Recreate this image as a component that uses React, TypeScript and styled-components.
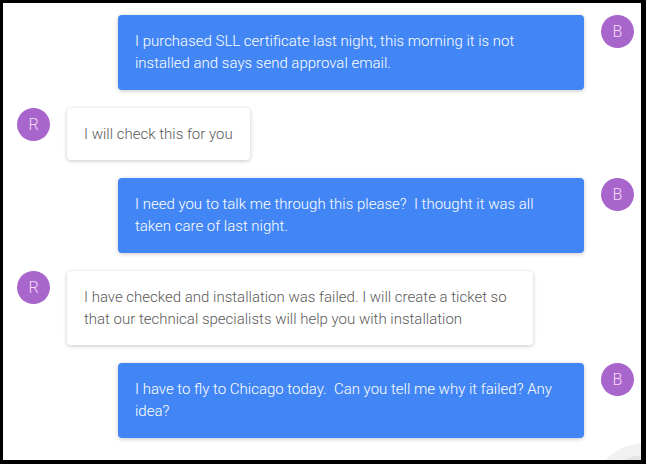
import React from "react";
import styled, { createGlobalStyle } from "styled-components";

const GlobalStyle = createGlobalStyle`
  html, body {
    margin: 0;
    padding: 0;
    background: #000;
  }
  body {
    font-family: Roboto, "Noto Sans", sans-serif;
  }
`;

const Frame = styled.div`
  position: relative;
  margin: 3px 5px 0 3px;
  height: 457px;
  background: #fff;
  overflow: hidden;
`;

const Thread = styled.div`
  display: flex;
  flex-direction: column;
  gap: 18px;
  padding: 12px 7px 0 14px;
`;

const Row = styled.div<{ $mine: boolean }>`
  display: flex;
  flex-direction: ${(p) => (p.$mine ? "row-reverse" : "row")};
  align-items: flex-start;
  gap: 17px;
`;

const Avatar = styled.div`
  flex: 0 0 33px;
  width: 33px;
  height: 33px;
  border-radius: 50%;
  background: #a865cb;
  color: #f3ddf7;
  font-size: 16px;
  font-weight: 300;
  display: flex;
  align-items: center;
  justify-content: center;
`;

const Bubble = styled.div<{ $mine: boolean }>`
  box-sizing: border-box;
  max-width: 466px;
  width: ${(p) => (p.$mine ? "466px" : "auto")};
  padding: 15px 17px 15.5px;
  border-radius: 4px;
  font-size: 15px;
  font-weight: 300;
  line-height: 22px;
  white-space: pre-wrap;
  background: ${(p) => (p.$mine ? "#4286f5" : "#fff")};
  color: ${(p) => (p.$mine ? "#fff" : "#5a5a5a")};
  box-shadow: 0 1px 4px rgba(0, 0, 0, 0.22);
`;

/* half-hidden floating button peeking in at the bottom right */
const Fab = styled.div`
  position: absolute;
  right: -46px;
  bottom: -79px;
  width: 84px;
  height: 84px;
  border-radius: 50%;
  background: #e4e4e4;
  box-shadow: 0 0 0 12px #f1f1f1;
`;

type Message = { mine: boolean; who: string; text: string };

const messages: Message[] = [
  {
    mine: true,
    who: "B",
    text: "I purchased SLL certificate last night, this morning it is not installed and says send approval email.",
  },
  { mine: false, who: "R", text: "I will check this for you" },
  {
    mine: true,
    who: "B",
    text: "I need you to talk me through this please?  I thought it was all taken care of last night.",
  },
  {
    mine: false,
    who: "R",
    text: "I have checked and installation was failed. I will create a ticket so that our technical specialists will help you with installation",
  },
  {
    mine: true,
    who: "B",
    text: "I have to fly to Chicago today.  Can you tell me why it failed? Any idea?",
  },
];

const App = () => {
  return (
    <>
      <GlobalStyle />
      <Frame>
        <Thread>
          {messages.map((m, i) => (
            <Row key={i} $mine={m.mine}>
              <Avatar>{m.who}</Avatar>
              <Bubble $mine={m.mine}>{m.text}</Bubble>
            </Row>
          ))}
        </Thread>
        <Fab />
      </Frame>
    </>
  );
};

export default App;
